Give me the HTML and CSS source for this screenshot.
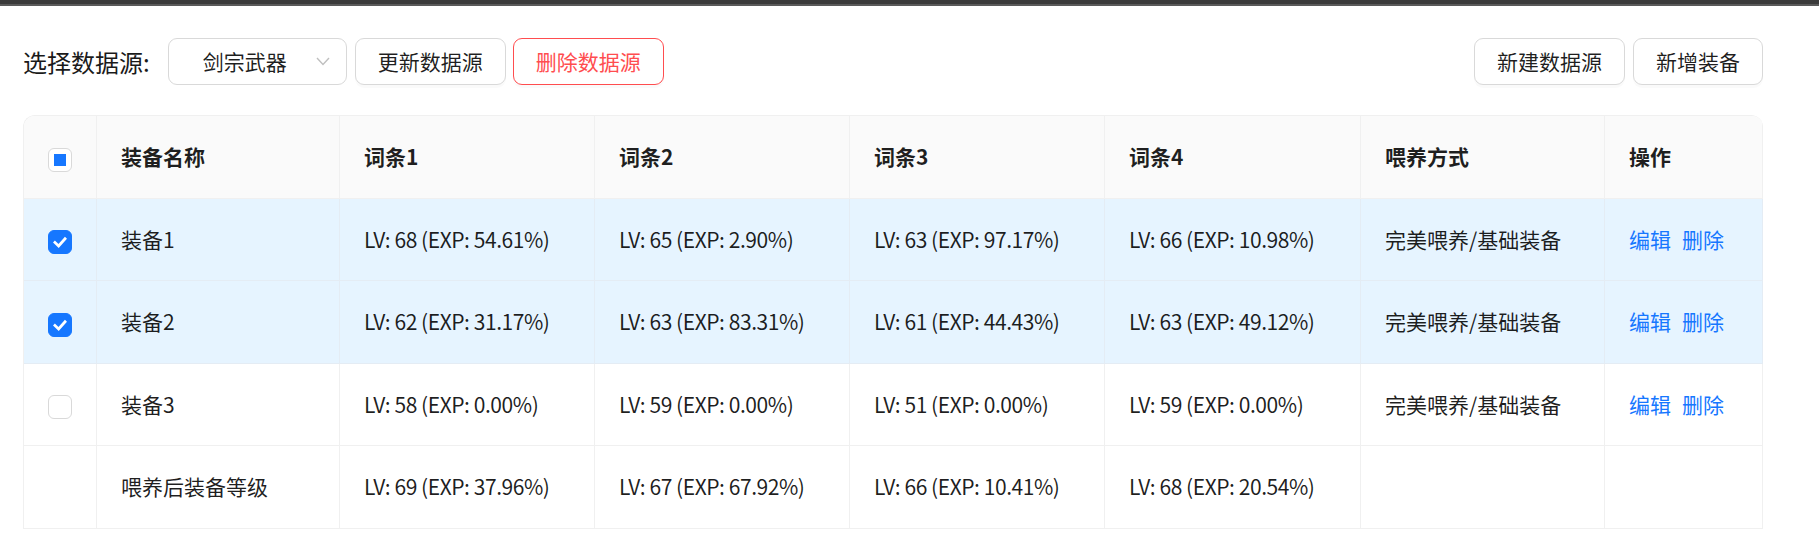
FILE: index.html
```html
<!DOCTYPE html>
<html lang="zh-CN">
<head>
<meta charset="utf-8">
<title>装备喂养</title>
<link rel="stylesheet" href="styles.css">
</head>
<body>
<div class="topbar"></div>
<main class="page">
  <div class="toolbar">
    <div class="tool-left">
      <span class="label">选择数据源:</span>
      <div class="select">
        <span class="select-value">剑宗武器</span>
        <svg class="select-arrow" width="14" height="9" viewBox="0 0 14 9"><polyline points="1,1 7,7.5 13,1" fill="none" stroke="#bfbfbf" stroke-width="1.4"/></svg>
      </div>
      <button class="btn">更新数据源</button>
      <button class="btn btn-danger">删除数据源</button>
    </div>
    <div class="tool-right">
      <button class="btn">新建数据源</button>
      <button class="btn">新增装备</button>
    </div>
  </div>

  <div class="table-wrap">
    <table class="table">
      <colgroup>
        <col class="c-sel"><col class="c-name"><col class="c-attr"><col class="c-attr"><col class="c-attr"><col class="c-attr4"><col class="c-feed"><col class="c-op">
      </colgroup>
      <thead>
        <tr>
          <th class="sel"><span class="cb cb-indet"><span class="cb-dot"></span></span></th>
          <th>装备名称</th>
          <th>词条1</th>
          <th>词条2</th>
          <th>词条3</th>
          <th>词条4</th>
          <th>喂养方式</th>
          <th>操作</th>
        </tr>
      </thead>
      <tbody>
        <tr class="selected">
          <td class="sel"><span class="cb cb-checked"><svg width="24" height="24" viewBox="0 0 24 24"><polyline points="6.5,12.5 10.5,16.3 17.5,8.5" fill="none" stroke="#fff" stroke-width="3" stroke-linecap="square"/></svg></span></td>
          <td>装备1</td>
          <td class="num">LV: 68 (EXP: 54.61%)</td>
          <td class="num">LV: 65 (EXP: 2.90%)</td>
          <td class="num">LV: 63 (EXP: 97.17%)</td>
          <td class="num">LV: 66 (EXP: 10.98%)</td>
          <td>完美喂养/基础装备</td>
          <td><a class="link">编辑</a><a class="link">删除</a></td>
        </tr>
        <tr class="selected">
          <td class="sel"><span class="cb cb-checked"><svg width="24" height="24" viewBox="0 0 24 24"><polyline points="6.5,12.5 10.5,16.3 17.5,8.5" fill="none" stroke="#fff" stroke-width="3" stroke-linecap="square"/></svg></span></td>
          <td>装备2</td>
          <td class="num">LV: 62 (EXP: 31.17%)</td>
          <td class="num">LV: 63 (EXP: 83.31%)</td>
          <td class="num">LV: 61 (EXP: 44.43%)</td>
          <td class="num">LV: 63 (EXP: 49.12%)</td>
          <td>完美喂养/基础装备</td>
          <td><a class="link">编辑</a><a class="link">删除</a></td>
        </tr>
        <tr>
          <td class="sel"><span class="cb"></span></td>
          <td>装备3</td>
          <td class="num">LV: 58 (EXP: 0.00%)</td>
          <td class="num">LV: 59 (EXP: 0.00%)</td>
          <td class="num">LV: 51 (EXP: 0.00%)</td>
          <td class="num">LV: 59 (EXP: 0.00%)</td>
          <td>完美喂养/基础装备</td>
          <td><a class="link">编辑</a><a class="link">删除</a></td>
        </tr>
        <tr>
          <td class="sel"></td>
          <td>喂养后装备等级</td>
          <td class="num">LV: 69 (EXP: 37.96%)</td>
          <td class="num">LV: 67 (EXP: 67.92%)</td>
          <td class="num">LV: 66 (EXP: 10.41%)</td>
          <td class="num">LV: 68 (EXP: 20.54%)</td>
          <td></td>
          <td></td>
        </tr>
      </tbody>
    </table>
  </div>
</main>
</body>
</html>
```

FILE: styles.css
```css
* { box-sizing: border-box; }
html, body { margin: 0; padding: 0; background: #fff; }
body {
  font-family: "Noto Sans CJK SC", "Noto Sans", sans-serif;
  font-size: 21px;
  color: rgba(0, 0, 0, 0.88);
}
.topbar {
  height: 6px;
  background: #3b3b3b;
  border-bottom: 2px solid #5a5a5a;
}
.page {
  padding: 32px 0 0 23px;
  width: 1763px;
}
.toolbar {
  display: flex;
  justify-content: space-between;
  align-items: center;
  height: 47px;
}
.tool-left, .tool-right {
  display: flex;
  align-items: center;
  gap: 8px;
}
.tool-left .btn + .btn { margin-left: -1px; }
.label {
  font-size: 24px;
  margin-right: 10px;
  line-height: 47px;
  color: #1a1a1a;
}
.select {
  width: 179px;
  height: 47px;
  border: 1px solid #d9d9d9;
  border-radius: 9px;
  display: flex;
  align-items: center;
  padding: 0 16px 0 34px;
  background: #fff;
}
.select-value { line-height: 1; }
.select-arrow { margin-left: auto; }
.btn {
  font-family: inherit;
  font-size: 21px;
  height: 47px;
  padding: 0 22px;
  border: 1px solid #d9d9d9;
  border-radius: 9px;
  background: #fff;
  color: rgba(0, 0, 0, 0.88);
  box-shadow: 0 3px 0 rgba(0, 0, 0, 0.02);
  line-height: 1;
}
.btn-danger {
  border-color: #ff4d4f;
  color: #ff4d4f;
}
.table-wrap {
  margin-top: 30px;
  width: 1740px;
  border-top: 1px solid #f0f0f0;
  border-left: 1px solid #f0f0f0;
  border-radius: 12px 12px 0 0;
  overflow: hidden;
}
.table {
  width: 1739px;
  table-layout: fixed;
  border-collapse: separate;
  border-spacing: 0;
}
.c-sel { width: 73px; }
.c-name { width: 243px; }
.c-attr { width: 255px; }
.c-attr4 { width: 256px; }
.c-feed { width: 244px; }
.c-op { width: 158px; }
.table th, .table td {
  padding: 24px 24px;
  line-height: 33px;
  height: 82.5px;
  text-align: left;
  border-right: 1px solid #f0f0f0;
  border-bottom: 1px solid #f0f0f0;
  white-space: nowrap;
  vertical-align: middle;
}
.table td.num { letter-spacing: -0.45px; }
.table th {
  background: #fafafa;
  font-weight: 700;
  color: rgba(0, 0, 0, 0.88);
}
.table tr.selected td {
  background: #e6f4ff;
  border-right-color: #e4ecf4;
  border-bottom-color: #e4ecf4;
}
.table .sel {
  padding: 0;
  text-align: center;
}
.cb {
  display: inline-flex;
  align-items: center;
  justify-content: center;
  width: 24px;
  height: 24px;
  border: 1px solid #d9d9d9;
  border-radius: 6px;
  background: #fff;
  vertical-align: middle;
}
.cb-checked {
  background: #1677ff;
  border-color: #1677ff;
}
.cb-checked svg { display: block; }
.cb-dot {
  width: 12px;
  height: 12px;
  background: #1677ff;
}
.link {
  color: #1677ff;
  cursor: pointer;
  margin-right: 11px;
}
```
